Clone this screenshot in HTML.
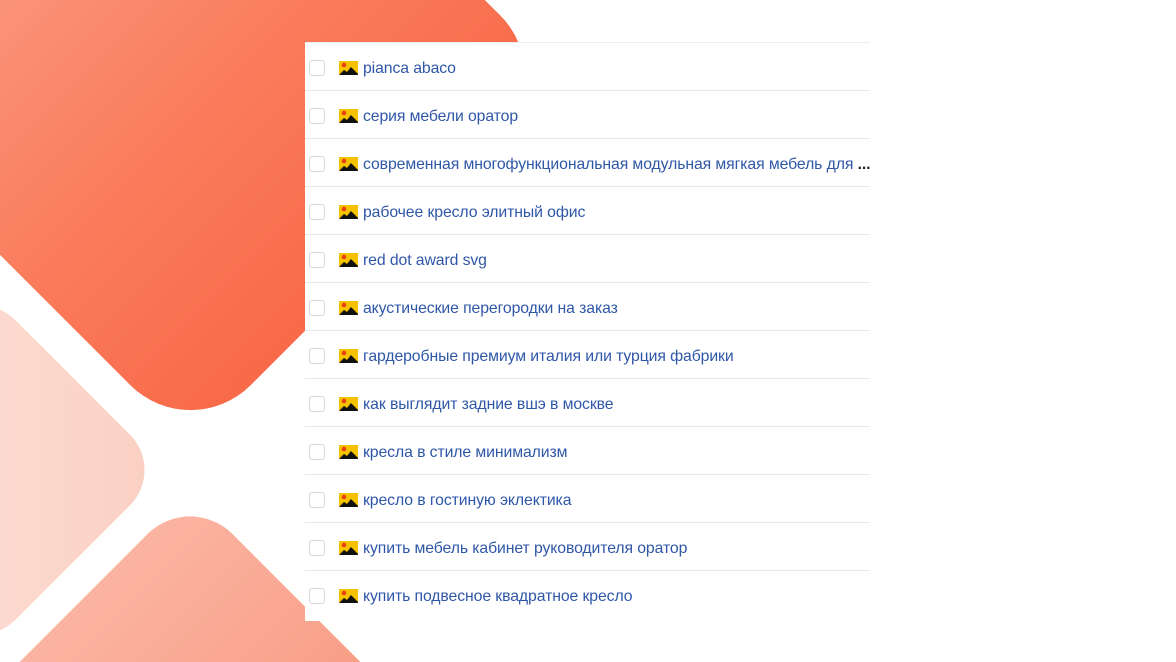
<!DOCTYPE html>
<html><head><meta charset="utf-8"><style>
html,body{margin:0;padding:0;width:1176px;height:662px;overflow:hidden;background:#fff;position:relative;font-family:"Liberation Sans",sans-serif}
.sh{position:absolute;transform:rotate(45deg)}
#a{width:523px;height:523px;left:-71px;top:-186px;border-radius:85px;background:linear-gradient(90deg,#fb9a80,#fa7a5a 60%,#f86a48)}
#b{width:262px;height:262px;left:-151px;top:339px;border-radius:50px;background:linear-gradient(45deg,#fde6df,#fbcfc2)}
#c{width:340px;height:340px;left:20px;top:562px;border-radius:60px;background:linear-gradient(90deg,#fbb4a2,#f9a28b 60%,#f88f76)}
#p{position:absolute;left:305px;top:42px;width:565px;height:578px;background:#fff;border-top:1px solid #eee;overflow:hidden}
.r{height:48px;border-bottom:1px solid #e8e8e8;box-sizing:border-box;position:relative;white-space:nowrap;overflow:hidden}
.r:last-child{border-bottom:none}
.cb{position:absolute;left:4px;top:17px;width:16px;height:16px;border:1px solid #d8d8d8;border-radius:3px;box-sizing:border-box}
.ic{position:absolute;left:34px;top:18px;width:19px;height:14px}
.t{position:absolute;left:58px;top:17px;font-size:15.8px;color:#2f57a8;letter-spacing:-0.1px}
</style></head><body>
<div class="sh" id="a"></div><div class="sh" id="b"></div><div class="sh" id="c"></div>
<div id="p">
<div class="r"><div class="cb"></div><svg class="ic" viewBox="0 0 19 14"><rect width="19" height="14" fill="#f6c200"/><circle cx="5" cy="4" r="2.3" fill="#e8401a"/><path d="M0 14 L5 9 L8 11 L12 6 L19 13 L19 14Z" fill="#111"/></svg><span class="t">pianca abaco</span></div>
<div class="r"><div class="cb"></div><svg class="ic" viewBox="0 0 19 14"><rect width="19" height="14" fill="#f6c200"/><circle cx="5" cy="4" r="2.3" fill="#e8401a"/><path d="M0 14 L5 9 L8 11 L12 6 L19 13 L19 14Z" fill="#111"/></svg><span class="t">серия мебели оратор</span></div>
<div class="r"><div class="cb"></div><svg class="ic" viewBox="0 0 19 14"><rect width="19" height="14" fill="#f6c200"/><circle cx="5" cy="4" r="2.3" fill="#e8401a"/><path d="M0 14 L5 9 L8 11 L12 6 L19 13 L19 14Z" fill="#111"/></svg><span class="t">современная многофункциональная модульная мягкая мебель для <b style="color:#222">...</b></span></div>
<div class="r"><div class="cb"></div><svg class="ic" viewBox="0 0 19 14"><rect width="19" height="14" fill="#f6c200"/><circle cx="5" cy="4" r="2.3" fill="#e8401a"/><path d="M0 14 L5 9 L8 11 L12 6 L19 13 L19 14Z" fill="#111"/></svg><span class="t">рабочее кресло элитный офис</span></div>
<div class="r"><div class="cb"></div><svg class="ic" viewBox="0 0 19 14"><rect width="19" height="14" fill="#f6c200"/><circle cx="5" cy="4" r="2.3" fill="#e8401a"/><path d="M0 14 L5 9 L8 11 L12 6 L19 13 L19 14Z" fill="#111"/></svg><span class="t">red dot award svg</span></div>
<div class="r"><div class="cb"></div><svg class="ic" viewBox="0 0 19 14"><rect width="19" height="14" fill="#f6c200"/><circle cx="5" cy="4" r="2.3" fill="#e8401a"/><path d="M0 14 L5 9 L8 11 L12 6 L19 13 L19 14Z" fill="#111"/></svg><span class="t">акустические перегородки на заказ</span></div>
<div class="r"><div class="cb"></div><svg class="ic" viewBox="0 0 19 14"><rect width="19" height="14" fill="#f6c200"/><circle cx="5" cy="4" r="2.3" fill="#e8401a"/><path d="M0 14 L5 9 L8 11 L12 6 L19 13 L19 14Z" fill="#111"/></svg><span class="t">гардеробные премиум италия или турция фабрики</span></div>
<div class="r"><div class="cb"></div><svg class="ic" viewBox="0 0 19 14"><rect width="19" height="14" fill="#f6c200"/><circle cx="5" cy="4" r="2.3" fill="#e8401a"/><path d="M0 14 L5 9 L8 11 L12 6 L19 13 L19 14Z" fill="#111"/></svg><span class="t">как выглядит задние вшэ в москве</span></div>
<div class="r"><div class="cb"></div><svg class="ic" viewBox="0 0 19 14"><rect width="19" height="14" fill="#f6c200"/><circle cx="5" cy="4" r="2.3" fill="#e8401a"/><path d="M0 14 L5 9 L8 11 L12 6 L19 13 L19 14Z" fill="#111"/></svg><span class="t">кресла в стиле минимализм</span></div>
<div class="r"><div class="cb"></div><svg class="ic" viewBox="0 0 19 14"><rect width="19" height="14" fill="#f6c200"/><circle cx="5" cy="4" r="2.3" fill="#e8401a"/><path d="M0 14 L5 9 L8 11 L12 6 L19 13 L19 14Z" fill="#111"/></svg><span class="t">кресло в гостиную эклектика</span></div>
<div class="r"><div class="cb"></div><svg class="ic" viewBox="0 0 19 14"><rect width="19" height="14" fill="#f6c200"/><circle cx="5" cy="4" r="2.3" fill="#e8401a"/><path d="M0 14 L5 9 L8 11 L12 6 L19 13 L19 14Z" fill="#111"/></svg><span class="t">купить мебель кабинет руководителя оратор</span></div>
<div class="r"><div class="cb"></div><svg class="ic" viewBox="0 0 19 14"><rect width="19" height="14" fill="#f6c200"/><circle cx="5" cy="4" r="2.3" fill="#e8401a"/><path d="M0 14 L5 9 L8 11 L12 6 L19 13 L19 14Z" fill="#111"/></svg><span class="t">купить подвесное квадратное кресло</span></div>
</div>
</body></html>
